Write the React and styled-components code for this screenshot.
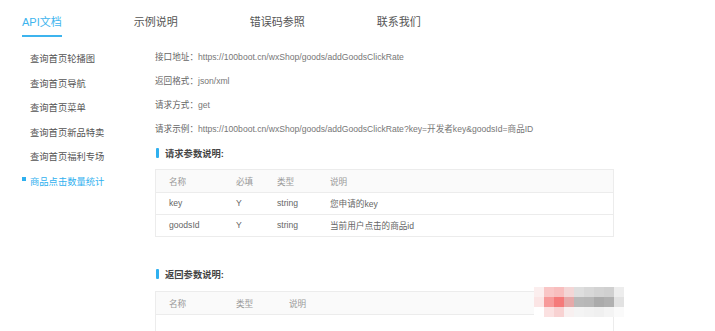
import React from "react";
import styled, { createGlobalStyle } from "styled-components";

const Global = createGlobalStyle`
  html, body { margin: 0; padding: 0; background: #fff; }
  body {
    font-family: "Liberation Sans", "Noto Sans CJK SC", sans-serif;
    overflow: hidden;
  }
  * { box-sizing: border-box; }
`;

const Page = styled.div`
  position: relative;
  width: 715px;
  min-height: 331px;
`;

const Tabs = styled.nav`
  display: flex;
  gap: 72px;
  padding-left: 22px;
`;

const Tab = styled.div`
  padding-top: 15px;
  padding-bottom: 6px;
  line-height: 14px;
  font-size: 11px;
  color: ${(p) => (p.$active ? "#3db4ee" : "#555")};
  border-bottom: 2px solid ${(p) => (p.$active ? "#3db4ee" : "transparent")};
`;

const Main = styled.div`
  display: flex;
`;

const Side = styled.ul`
  list-style: none;
  margin: 0;
  padding: 8.7px 0 0 22px;
  width: 155px;
  flex: none;
`;

const SideItem = styled.li`
  display: flex;
  align-items: center;
  gap: 4px;
  height: 24.6px;
  font-size: 9.3px;
  color: ${(p) => (p.$active ? "#2fb0ef" : "#555")};
  &::before {
    content: "";
    width: 4px;
    height: 4px;
    margin-top: -3px;
    background: ${(p) => (p.$active ? "#2fb0ef" : "transparent")};
  }
`;

const Content = styled.div`
  flex: 1;
  padding-top: 7.6px;
  padding-right: 101px;
`;

const Line = styled.div`
  height: 24.2px;
  line-height: 24.2px;
  font-size: 8.6px;
  color: #777;
  white-space: nowrap;
`;

const Label = styled.span`
  color: #666;
`;

const Heading = styled.div`
  display: flex;
  align-items: center;
  gap: 6px;
  height: 24.2px;
  margin-top: ${(p) => p.$top || 0}px;
  padding-left: 1px;
  font-size: 9.3px;
  font-weight: bold;
  color: #444;
  &::before {
    content: "";
    width: 3px;
    height: 10px;
    border-radius: 1px;
    background: #2fb0ef;
  }
`;

const Table = styled.div`
  margin-top: ${(p) => p.$top || 0}px;
  border: 1px solid #ececec;
  border-bottom: ${(p) => (p.$open ? "none" : "1px solid #ececec")};
`;

const Row = styled.div`
  display: grid;
  grid-template-columns: ${(p) => p.$cols};
  height: ${(p) => (p.$head ? 22 : 22)}px;
  padding-left: 13px;
  align-items: center;
  background: ${(p) => (p.$head ? "#fafafa" : "#fff")};
  font-size: 8.6px;
  color: ${(p) => (p.$head ? "#999" : "#666")};
  & + & {
    border-top: 1px solid #ececec;
  }
`;

const Cell = styled.div`
  white-space: nowrap;
`;

const Mosaic = styled.svg`
  position: absolute;
  left: 534px;
  top: 287px;
`;

const mosaic = [
  ["#fbeeee", "#f9c6c6", "#f8bebe", "#f3d6d6", "#dedede", "#d8d8d8", "#d3d3d3", "#d0d0d0", "#ededed"],
  ["#fbe5e5", "#f79a9a", "#f57a7a", "#e6a9a9", "#b9b9b9", "#b7b7b7", "#ababab", "#b0b0b0", "#e2e2e2"],
  ["#ffffff", "#fbe1e1", "#f8d2d2", "#f8f0f0", "#f4f4f4", "#f2f2f2", "#f0f0f0", "#f4f4f4", "#fafafa"],
];

const tabs = ["API文档", "示例说明", "错误码参照", "联系我们"];
const side = ["查询首页轮播图", "查询首页导航", "查询首页菜单", "查询首页新品特卖", "查询首页福利专场", "商品点击数量统计"];
const info = [
  ["接口地址：", "https://100boot.cn/wxShop/goods/addGoodsClickRate"],
  ["返回格式：", "json/xml"],
  ["请求方式：", "get"],
  ["请求示例：", "https://100boot.cn/wxShop/goods/addGoodsClickRate?key=开发者key&goodsId=商品ID"],
];
const reqCols = "67px 41px 53px 1fr";
const reqRows = [
  ["key", "Y", "string", "您申请的key"],
  ["goodsId", "Y", "string", "当前用户点击的商品id"],
];
const resCols = "67px 53px 1fr";

export default function App() {
  return (
    <Page>
      <Global />
      <Tabs>
        {tabs.map((t, i) => (
          <Tab key={t} $active={i === 0}>{t}</Tab>
        ))}
      </Tabs>
      <Main>
        <Side>
          {side.map((s, i) => (
            <SideItem key={s} $active={i === side.length - 1}>{s}</SideItem>
          ))}
        </Side>
        <Content>
          {info.map(([l, v]) => (
            <Line key={l}>
              <Label>{l}</Label>
              {v}
            </Line>
          ))}
          <Heading>请求参数说明:</Heading>
          <Table $top={3.4}>
            <Row $head $cols={reqCols}>
              <Cell>名称</Cell>
              <Cell>必填</Cell>
              <Cell>类型</Cell>
              <Cell>说明</Cell>
            </Row>
            {reqRows.map((r) => (
              <Row key={r[0]} $cols={reqCols}>
                {r.map((c, j) => (
                  <Cell key={j}>{c}</Cell>
                ))}
              </Row>
            ))}
          </Table>
          <Heading $top={25}>返回参数说明:</Heading>
          <Table $top={5} $open>
            <Row $head $cols={resCols}>
              <Cell>名称</Cell>
              <Cell>类型</Cell>
              <Cell>说明</Cell>
            </Row>
            <Row $cols={resCols}>
              <Cell />
              <Cell />
              <Cell />
            </Row>
          </Table>
        </Content>
      </Main>
      <Mosaic width="90" height="30" viewBox="0 0 90 30">
        {mosaic.map((row, y) =>
          row.map((c, x) => <rect key={`${x}-${y}`} x={x * 10} y={y * 10} width="10" height="10" fill={c} />)
        )}
      </Mosaic>
    </Page>
  );
}
